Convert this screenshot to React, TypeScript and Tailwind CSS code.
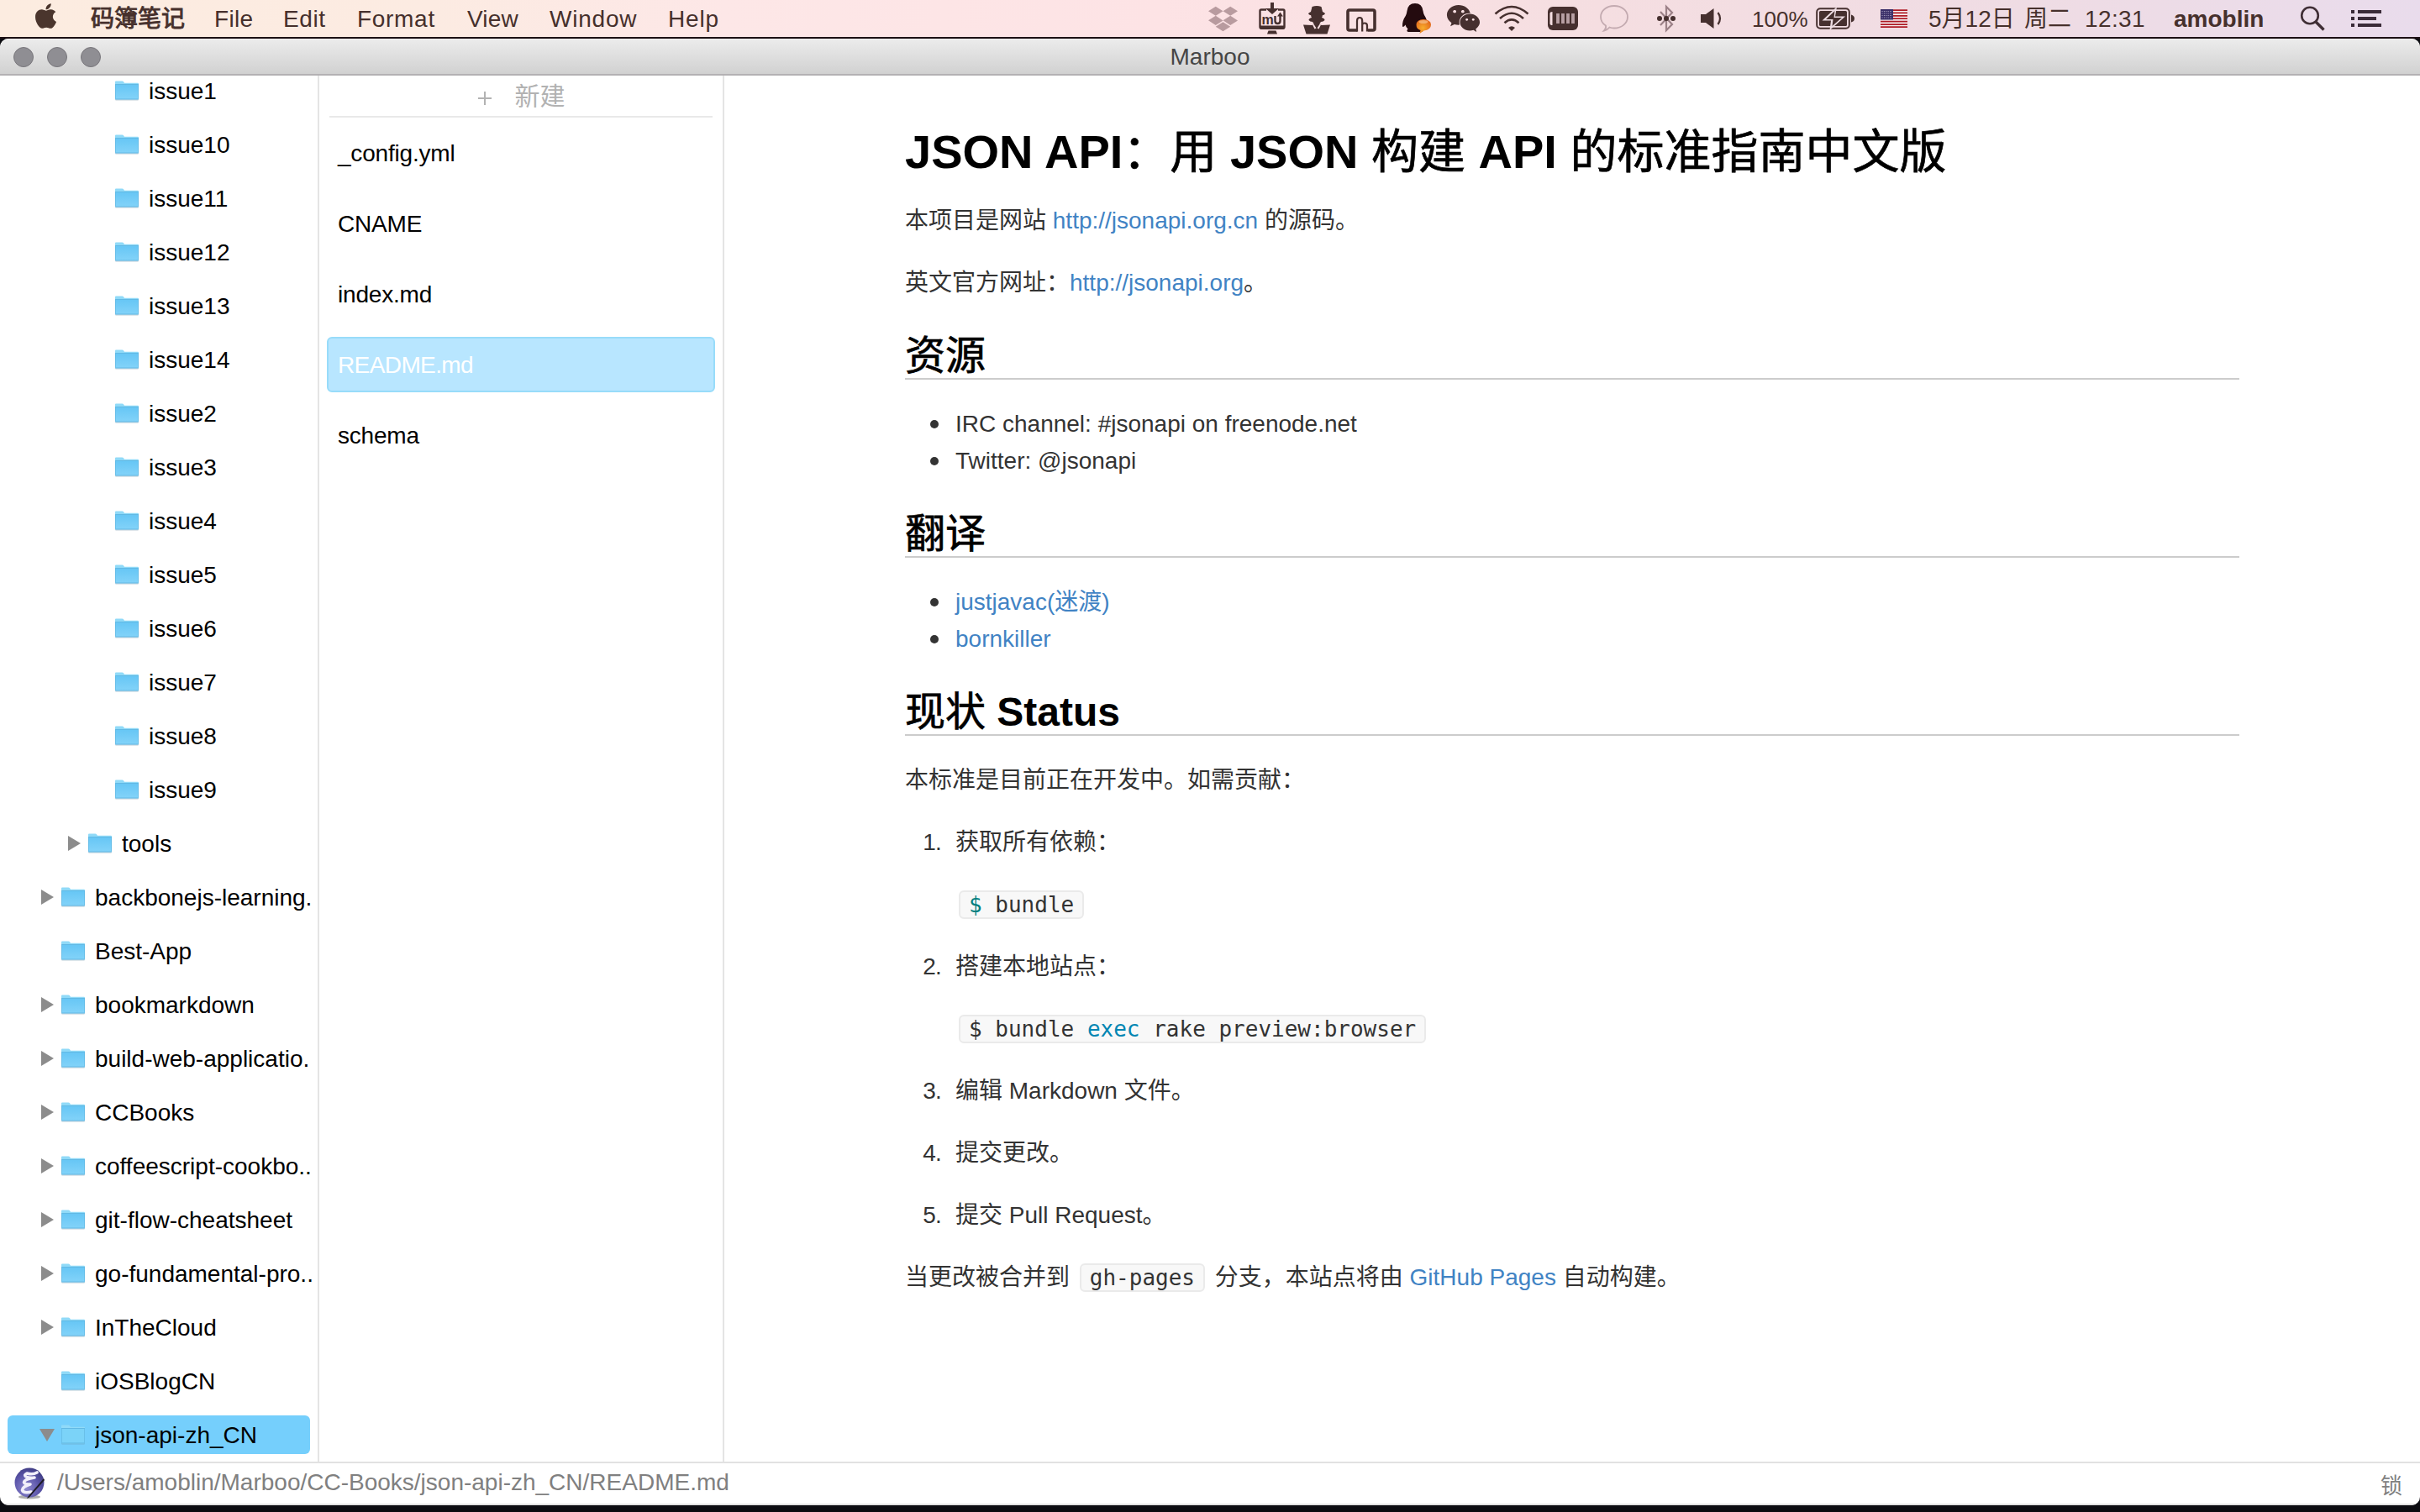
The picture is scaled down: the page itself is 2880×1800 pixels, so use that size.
import React from "react";
import { FaApple, FaDropbox, FaWeixin } from "react-icons/fa";

const INK = "#46302f";

type Node = { name: string; depth: 0 | 1 | 2; arrow?: "right" | "down"; selected?: boolean };

const tree: Node[] = [
  ...["1", "10", "11", "12", "13", "14", "2", "3", "4", "5", "6", "7", "8", "9"].map(
    (n): Node => ({ name: "issue" + n, depth: 2 })
  ),
  { name: "tools", depth: 1, arrow: "right" },
  { name: "backbonejs-learning.", depth: 0, arrow: "right" },
  { name: "Best-App", depth: 0 },
  { name: "bookmarkdown", depth: 0, arrow: "right" },
  { name: "build-web-applicatio.", depth: 0, arrow: "right" },
  { name: "CCBooks", depth: 0, arrow: "right" },
  { name: "coffeescript-cookbo..", depth: 0, arrow: "right" },
  { name: "git-flow-cheatsheet", depth: 0, arrow: "right" },
  { name: "go-fundamental-pro..", depth: 0, arrow: "right" },
  { name: "InTheCloud", depth: 0, arrow: "right" },
  { name: "iOSBlogCN", depth: 0 },
  { name: "json-api-zh_CN", depth: 0, arrow: "down", selected: true },
];

const files = ["_config.yml", "CNAME", "index.md", "README.md", "schema"];

const indent = { 0: "pl-[36px]", 1: "pl-[68px]", 2: "pl-[100px]" };

function Folder({ faded }: { faded?: boolean }) {
  return (
    <svg width="30" height="26" viewBox="0 0 30 26" className="shrink-0">
      <defs>
        <linearGradient id="folder" x1="0" y1="0" x2="0" y2="1">
          <stop offset="0" stopColor="#66c6f5" />
          <stop offset="1" stopColor="#83d3f9" />
        </linearGradient>
      </defs>
      <rect x="1" y="22.500" width="28" height="2" rx="1" fill={faded ? "#6fb6da" : "#b9cbd6"} />
      <path d="M1 2.500Q1 1.500 2 1.500H9.500Q10.500 1.500 11.200 2.500L12 3.700H28Q29 3.700 29 4.700V8H1Z" fill="#90daf8" />
      <path d="M1 5.500H29V22.500Q29 23.500 28 23.500H2Q1 23.500 1 22.500Z" fill={faded ? "#7bd3f8" : "url(#folder)"} />
      <path d="M1 5.500H29" stroke="#62b9e4" strokeWidth="1" />
      <path d="M1.500 6V22.800H28.500V6" stroke="#5eb4e0" strokeWidth="1" fill="none" opacity=".6" />
    </svg>
  );
}

function TreeRow({ node }: { node: Node }) {
  return (
    <li className="flex h-16 shrink-0 items-center pl-[9px]">
      <div
        className={
          "flex h-[46px] items-center rounded-[6px] " +
          indent[node.depth] +
          (node.selected ? " w-[360px] bg-[#75cffc]" : " w-[366px]")
        }
      >
        <span className="flex w-[27px] shrink-0 items-center">
          {node.arrow === "right" && (
            <svg width="19" height="20" viewBox="0 0 19 20" className="-mt-[1px]">
              <path d="M4 1L19 10L4 19Z" fill="#8c8c8c" />
            </svg>
          )}
          {node.arrow === "down" && (
            <svg width="22" height="20" viewBox="0 0 22 20" className="-mt-[1px]">
              <path d="M2 3H20L11 18Z" fill="#8c8c8c" />
            </svg>
          )}
        </span>
        <Folder faded={node.selected} />
        <span className="ml-[11px] min-w-0 flex-1 overflow-hidden pt-[1px] whitespace-nowrap text-[28px] leading-[34px] text-black">
          {node.name}
        </span>
      </div>
    </li>
  );
}

function MonitorIcon() {
  return (
    <svg width="32" height="40" viewBox="0 0 32 40">
      <path d="M9 9.500H3Q1.500 9.500 1.500 11V30Q1.500 31.500 3 31.500H29Q30.500 31.500 30.500 30V11Q30.500 9.500 29 9.500H23" fill="none" stroke={INK} strokeWidth="2.400" />
      <path d="M1 28.500H31V31Q31 33 29 33H3Q1 33 1 31Z" fill={INK} />
      <path d="M11.500 34.500H20.500L22 38.500H10Z" fill={INK} />
      <path d="M14 1H18V8H24L16 15L8 8H14Z" fill={INK} />
      <text x="3.500" y="26.500" fontSize="16" fontWeight="700" fontFamily="Liberation Sans" fill={INK}>m</text>
      <path d="M19.500 17V23Q19.500 26 22.500 26Q25.500 26 25.500 23V16" fill="none" stroke={INK} strokeWidth="2.400" />
      <path d="M22 17.500L25.500 12.500L29 17.500Z" fill={INK} />
    </svg>
  );
}

function SpyIcon() {
  return (
    <svg width="34" height="36" viewBox="0 0 34 36">
      <path d="M11.500 2Q17 0 22.500 2L24 8Q27 9 27 10.500Q25.500 12 23.800 12.200Q24 13.500 23 15Q26.500 16 26.500 18Q25 20 22 20L20.500 22L22.500 24L33 23.500L29.500 34.500H4.500L1 23.500L11.500 24L13.500 22L12 20Q9 20 7.500 18Q7.500 16 11 15Q10 13.500 10.200 12.200Q8.500 12 7 10.500Q7 9 10 8Z" fill={INK} />
      <path d="M13 22L16.500 27.500L14.500 28.500L12 23.500ZM21 22L17.500 27.500L19.500 28.500L22 23.500Z" fill="#f6dfe2" />
    </svg>
  );
}

function TrayIcon() {
  return (
    <svg width="36" height="30" viewBox="0 0 36 30">
      <path d="M13.500 27H4Q2 27 2 25V5Q2 3 4 3H32Q34 3 34 5V25Q34 27 32 27H26" fill="none" stroke={INK} strokeWidth="3.600" />
      <path d="M13 28.500V16Q13 12 16.200 12Q19.200 12 19.200 16V28.500V21Q19.200 18.500 22 18.500Q25 18.500 25 21.500V28.500" fill="none" stroke={INK} strokeWidth="2.200" />
    </svg>
  );
}

function PenguinIcon() {
  return (
    <svg width="36" height="38" viewBox="0 0 36 38">
      <defs>
        <radialGradient id="orange" cx=".45" cy=".6" r=".6">
          <stop offset="0" stopColor="#f8ad2c" />
          <stop offset="1" stopColor="#e2691c" />
        </radialGradient>
      </defs>
      <path d="M16 1Q24.500 1 25.500 10Q26 13 27 15Q31 21 31 28Q29.500 29 28 27Q27.500 31 25 33Q26 34.500 24 35H8Q5 34 7.500 31.500Q5 29 4.500 26.500Q2.500 30 1 28.500Q.5 22 5 15.500Q6 13.500 6.500 10Q7.500 1 16 1Z" fill="#240b0f" />
      <path d="M26 20Q35 20.500 35 26.500Q35 32.500 26.500 33.500L21.500 37L22.500 33Q17.500 31.500 17.500 26.500Q18 20 26 20Z" fill="url(#orange)" />
      <ellipse cx="26" cy="23" rx="5.500" ry="2" fill="#f6c08a" opacity=".7" />
    </svg>
  );
}

function WifiIcon() {
  return (
    <svg width="42" height="32" viewBox="0 0 42 32" fill="none" stroke={INK} strokeWidth="2.600">
      <path d="M1.500 10.500Q21-6.500 40.500 10.500" />
      <path d="M7 16Q21 3.500 35 16" />
      <path d="M12.500 21.200Q21 13.500 29.500 21.200" />
      <path d="M17 27Q21 23.500 25 27L21 31Z" fill={INK} stroke="none" />
    </svg>
  );
}

function MemoryIcon() {
  return (
    <svg width="36" height="28" viewBox="0 0 36 28">
      <rect width="36" height="28" rx="6" fill={INK} />
      <path d="M2.500 8Q2.500 6 5.500 6V22Q2.500 22 2.500 20Z" fill="#f6dfe2" />
      <path d="M12 8V20M18 8V20M24 8V20M30 8V20" stroke="#b8a0a4" strokeWidth="3.800" />
    </svg>
  );
}

function BubbleIcon() {
  return (
    <svg width="36" height="34" viewBox="0 0 36 34">
      <path d="M18 2C27 2 34 7.500 34 15C34 22.500 27 28.500 18 28.500C16 28.500 14 28.200 12.500 27.500C10.500 30 8.500 31 6 31.500C8 29.500 8.500 27.500 8 25.500C4 23 2 19.500 2 15C2 7.500 9 2 18 2Z" fill="none" stroke="#c3aab0" strokeWidth="1.800" />
    </svg>
  );
}

function BluetoothIcon() {
  return (
    <svg width="24" height="34" viewBox="0 0 24 34">
      <path d="M5 9L19 24L12 31V3L19 10L5 25" fill="none" stroke="#9c8288" strokeWidth="2.200" />
      <circle cx="4" cy="17" r="3" fill={INK} />
      <circle cx="12" cy="17" r="3" fill={INK} />
      <circle cx="20" cy="17" r="3" fill={INK} />
    </svg>
  );
}

function VolumeIcon() {
  return (
    <svg width="28" height="26" viewBox="0 0 28 26">
      <path d="M0 8H6L15.500 1V25L6 18H0Z" fill={INK} />
      <path d="M20.500 6Q25.500 13 20.500 20" fill="none" stroke={INK} strokeWidth="2.200" />
    </svg>
  );
}

function BatteryIcon() {
  return (
    <svg width="47" height="26" viewBox="0 0 47 26">
      <rect x="1.200" y="1.200" width="38.600" height="23.600" rx="4" fill="none" stroke={INK} strokeWidth="2" />
      <rect x="4" y="4" width="33" height="18" rx="1.500" fill={INK} />
      <path d="M42 8.500Q46 9.500 46 13Q46 16.500 42 17.500Z" fill={INK} />
      <path d="M25 -1L7.500 15.500H18L16.500 27L35 10.500H23Z" fill="#eedde3" />
      <path d="M22.500 4L12 14H20.500L19.500 22L31 12H21.500Z" fill={INK} />
    </svg>
  );
}

function FlagIcon() {
  return (
    <svg width="32" height="22" viewBox="0 0 32 22">
      <rect width="32" height="22" fill="#f5eef0" />
      <path d="M0 1H32M0 4.400H32M0 7.800H32M0 11.200H32M0 14.600H32M0 18H32M0 21.200H32" stroke="#ae1a24" strokeWidth="1.750" />
      <rect width="15" height="12.500" fill="#3a2f68" />
      <path d="M1.500 2.500H14M1.500 5H14M1.500 7.500H14M1.500 10H14" stroke="#b5aecb" strokeWidth="1" strokeDasharray="1 1.400" />
    </svg>
  );
}

function EmacsIcon() {
  return (
    <svg width="38" height="40" viewBox="0 0 38 40">
      <defs>
        <radialGradient id="orb" cx=".4" cy=".7" r=".75">
          <stop offset="0" stopColor="#8f8ad0" />
          <stop offset=".6" stopColor="#5a54a8" />
          <stop offset="1" stopColor="#3d3a80" />
        </radialGradient>
      </defs>
      <ellipse cx="18" cy="36" rx="13" ry="2.500" fill="#777" opacity=".6" />
      <circle cx="18" cy="19" r="17.500" fill="url(#orb)" />
      <path d="M27 7Q22 10 15 8Q11 10 14 12Q18 14 24 13Q12 15 11.500 18.500Q12 21.500 19 21Q10 23.500 9.500 28Q11 32 20 30" fill="none" stroke="#f1effa" strokeWidth="3.600" strokeLinecap="round" strokeLinejoin="round" />
      <path d="M35 14L16 36L15 38L18 36.500L36 16Z" fill="#1d1b26" />
    </svg>
  );
}

function MenuBar() {
  const t = "whitespace-nowrap shrink-0 pt-[1px] ";
  return (
    <header className="flex h-[46px] items-start border-b-2 border-[#1c1014] bg-[linear-gradient(90deg,#fcece0_0%,#fcebe2_18%,#fde7e7_30%,#fde3e5_48%,#f5dee1_66%,#efdce4_84%,#e9dcec_100%)] text-[28px] leading-[44px] text-[#46302c]">
      <div className="flex h-11 w-full items-center">
        <FaApple className="ml-[39px] mb-[6px] h-[34px] w-[31px] shrink-0 text-[#4a352d]" />
        <span className={t + "ml-[38px] w-[147px] [-webkit-text-stroke:0.9px_#46302c]"}>码簿笔记</span>
        <span className={t + "w-[82px] tracking-[0.3px]"}>File</span>
        <span className={t + "w-[88px] tracking-[0.6px]"}>Edit</span>
        <span className={t + "w-[131px] tracking-[0.7px]"}>Format</span>
        <span className={t + "w-[98px] tracking-[0.2px]"}>View</span>
        <span className={t + "w-[141px] tracking-[0.8px]"}>Window</span>
        <span className={t + "w-[80px] tracking-[0.8px]"}>Help</span>
        <span className="flex-1" />
        <span className="flex w-[60px] shrink-0 items-center"><FaDropbox className="h-[37px] w-[35px] text-[#b89b9f]" /></span>
        <span className="flex w-[52px] shrink-0 items-center"><MonitorIcon /></span>
        <span className="flex w-[52px] shrink-0 items-center pt-1"><SpyIcon /></span>
        <span className="flex w-[66px] shrink-0 items-center pt-1"><TrayIcon /></span>
        <span className="flex w-[53px] shrink-0 items-center"><PenguinIcon /></span>
        <span className="flex w-[57px] shrink-0 items-center"><FaWeixin className="h-[40px] w-[41px] text-[#46302f]" /></span>
        <span className="flex w-[64px] shrink-0 items-center"><WifiIcon /></span>
        <span className="flex w-[61px] shrink-0 items-center"><MemoryIcon /></span>
        <span className="flex w-[68px] shrink-0 items-center"><BubbleIcon /></span>
        <span className="flex w-[53px] shrink-0 items-center"><BluetoothIcon /></span>
        <span className="flex w-[61px] shrink-0 items-center"><VolumeIcon /></span>
        <span className={t + "w-[76px] text-[26px] leading-[42px]"}>100%</span>
        <span className="flex w-[77px] shrink-0 items-center"><BatteryIcon /></span>
        <span className="flex w-[57px] shrink-0 items-center"><FlagIcon /></span>
        <span className={t + "w-[114px]"}>5月12日</span>
        <span className={t + "w-[72px]"}>周二</span>
        <span className={t + "w-[106px] tracking-[0.4px]"}>12:31</span>
        <span className={t + "w-[150px] font-bold"}>amoblin</span>
        <svg width="30" height="30" viewBox="0 0 30 30" className="mr-[31px] shrink-0" fill="none" stroke="#3f2e35" strokeWidth="2.600">
          <circle cx="12" cy="11.500" r="9.800" />
          <path d="M18.500 18.500L28.500 28.500" strokeWidth="3.400" />
        </svg>
        <svg width="36" height="20" viewBox="0 0 36 20" className="mr-[46px] shrink-0" fill="#3a2b38">
          <path d="M0 0H4V4H0ZM8 0H36V4H8ZM0 8H4V12H0ZM8 8H30V12H8ZM0 16H4V20H0ZM8 16H36V20H8Z" />
        </svg>
      </div>
    </header>
  );
}

function C({ children }: { children: React.ReactNode }) {
  return <span className="font-normal [-webkit-text-stroke:0.7px_black]">{children}</span>;
}

function Link({ children }: { children: React.ReactNode }) {
  return <a className="text-[#4183c4]">{children}</a>;
}

function H2({ children }: { children: React.ReactNode }) {
  return (
    <h2 className="mt-[37px] mb-[31px] border-b-2 border-[#cccccc] pt-[2px] text-[48px] leading-[52px] font-bold text-black">
      {children}
    </h2>
  );
}

function Bullet({ children }: { children: React.ReactNode }) {
  return (
    <li className="flex h-11 items-center">
      <span className="mr-[20px] ml-[30px] size-[10px] rounded-full bg-[#333333]" />
      <span>{children}</span>
    </li>
  );
}

function Code({ children }: { children: React.ReactNode }) {
  return (
    <code className="mx-1 inline-block h-[34px] rounded-[6px] border-2 border-[#eaeaea] bg-[#f8f8f8] px-[10px] align-baseline font-['DejaVu_Sans_Mono',monospace] text-[26px] leading-[30px] whitespace-pre">
      {children}
    </code>
  );
}

function Step({ n, children, code }: { n: number; children: React.ReactNode; code?: React.ReactNode }) {
  return (
    <li className="flex">
      <span className="w-[43px] shrink-0 text-right tracking-[-0.8px]">{n}.</span>
      <div className="ml-[17px]">
        <p className="mb-[30px] h-11">{children}</p>
        {code && <p className="mb-[30px] h-11"><Code>{code}</Code></p>}
      </div>
    </li>
  );
}

function Article() {
  return (
    <article className="mt-[59px] ml-[215px] w-[1588px] text-[28px] leading-[44px] text-[#333333]">
      <h1 className="mb-[28px] text-[56px] leading-[64px] font-bold whitespace-nowrap text-black">
        JSON API<C>：用</C> JSON <C>构建</C> API <C>的标准指南中文版</C>
      </h1>
      <p className="mb-[30px] h-11">本项目是网站 <Link>http://jsonapi.org.cn</Link> 的源码。</p>
      <p className="h-11">英文官方网址：<Link>http://jsonapi.org</Link>。</p>
      <H2><C>资源</C></H2>
      <ul>
        <Bullet>IRC channel: #jsonapi on freenode.net</Bullet>
        <Bullet>Twitter: @jsonapi</Bullet>
      </ul>
      <H2><C>翻译</C></H2>
      <ul>
        <Bullet><Link>justjavac(迷渡)</Link></Bullet>
        <Bullet><Link>bornkiller</Link></Bullet>
      </ul>
      <H2><C>现状</C> Status</H2>
      <p className="mb-[30px] h-11">本标准是目前正在开发中。如需贡献：</p>
      <ol>
        <Step n={1} code={<><span className="text-[#008080]">$</span> bundle</>}>获取所有依赖：</Step>
        <Step n={2} code={<>$ bundle <span className="text-[#0086b3]">exec</span> rake preview:browser</>}>搭建本地站点：</Step>
        <Step n={3}>编辑 Markdown 文件。</Step>
        <Step n={4}>提交更改。</Step>
        <Step n={5}>提交 Pull Request。</Step>
      </ol>
      <p className="h-11 whitespace-nowrap">
        当更改被合并到 <Code>gh-pages</Code> 分支，本站点将由 <Link>GitHub Pages</Link> 自动构建。
      </p>
    </article>
  );
}

export default function App() {
  return (
    <div lang="zh-CN" className="flex h-[1800px] w-[2880px] flex-col overflow-hidden bg-[#0c0c11] font-['Liberation_Sans','Noto_Sans_CJK_SC',sans-serif]">
      <MenuBar />
      <div className="flex h-[1746px] flex-col overflow-hidden rounded-[10px] bg-white">
        <div className="grid h-11 shrink-0 grid-cols-[1fr_auto_1fr] items-center border-b-2 border-[#b4b1b4] bg-linear-to-b from-[#ececec] to-[#d1d1d1]">
          <div className="flex gap-4 pt-[1px] pl-4">
            <span className="size-6 rounded-full border border-[#78767b] bg-[#8f8e93]" />
            <span className="size-6 rounded-full border border-[#78767b] bg-[#8f8e93]" />
            <span className="size-6 rounded-full border border-[#78767b] bg-[#8f8e93]" />
          </div>
          <h1 className="pt-[2px] text-[28px] leading-[40px] text-[#464646]">Marboo</h1>
        </div>
        <main className="flex h-[1650px] shrink-0">
          <nav className="flex w-[380px] shrink-0 flex-col overflow-hidden border-r-2 border-[#e4e4e4]">
            <ul className="-mt-[14px] flex flex-col">
              {tree.map((n) => <TreeRow key={n.name} node={n} />)}
            </ul>
          </nav>
          <section className="w-[482px] shrink-0 border-r-2 border-[#e4e4e4]">
            <button className="ml-3 flex h-[50px] w-[456px] items-center justify-center gap-[27px] border-b-2 border-[#e9e9e9] text-[30px] text-[#b2b2b2]">
              <svg width="18" height="18" viewBox="0 0 18 18" className="mt-[5px]"><path d="M9 1V17M1 9H17" stroke="#b2b2b2" strokeWidth="2" /></svg>
              <span>新建</span>
            </button>
            <ul>
              {files.map((f) => (
                <li key={f} className="flex h-[84px] items-center pl-[9px]">
                  <div
                    className={
                      "flex h-[66px] w-[462px] items-center rounded-[6px] border-2 pt-[1px] pl-[11px] text-[28px] " +
                      (f === "README.md" ? "border-[#98dcfa] bg-[#b8e6ff] tracking-[-0.6px] text-white" : "border-transparent tracking-[-0.2px] text-black")
                    }
                  >
                    {f}
                  </div>
                </li>
              ))}
            </ul>
          </section>
          <section className="flex-1"><Article /></section>
        </main>
        <footer className="flex flex-1 items-center border-t-2 border-b-2 border-[#e2e2e2] text-[28px] leading-[36px] text-[#808080]">
          <span className="ml-[17px] flex w-[51px] shrink-0"><EmacsIcon /></span>
          <span className="-mt-[2px]">/Users/amoblin/Marboo/CC-Books/json-api-zh_CN/README.md</span>
          <span className="mt-[6px] mr-[21px] ml-auto text-[26px]">锁</span>
        </footer>
      </div>
    </div>
  );
}
